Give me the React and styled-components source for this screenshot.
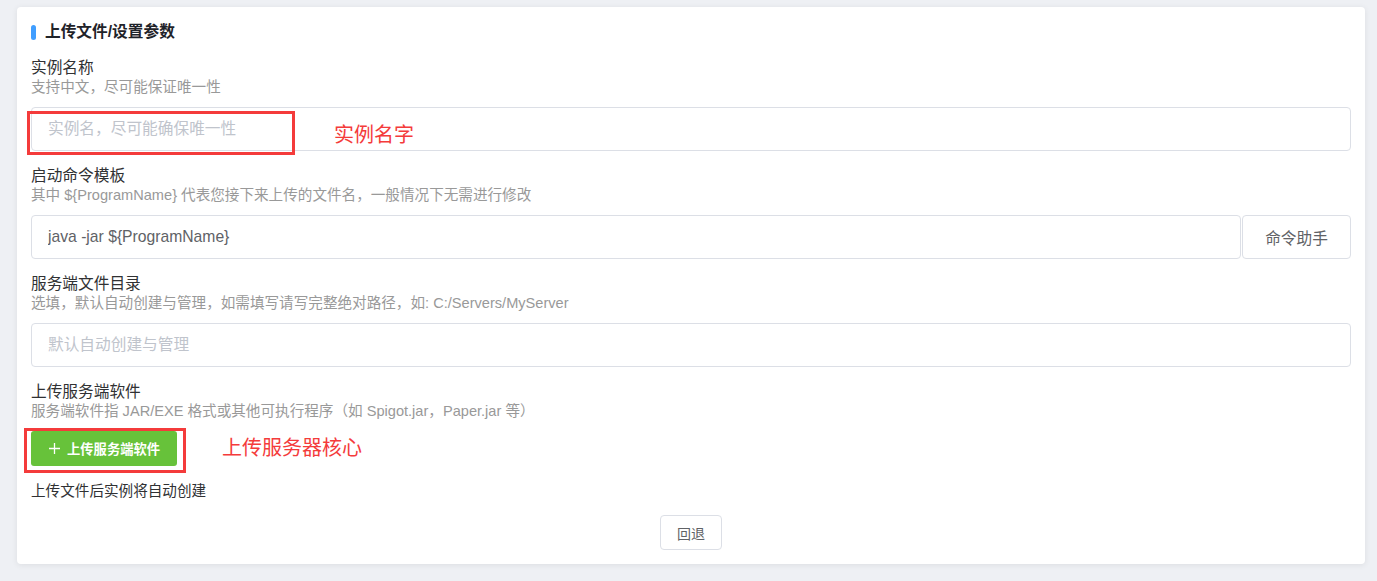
import React from 'react';
import styled, { createGlobalStyle } from 'styled-components';

const GlobalStyle = createGlobalStyle`
    html, body {
        margin: 0;
        padding: 0;
        background: #eef0f4;
        font-family: "Liberation Sans", "Noto Sans CJK SC", sans-serif;
    }
`;

const Page = styled.div`
    padding: 7px 12px 18px 17px;
`;

const Card = styled.div`
    background: #fff;
    border-radius: 4px;
    box-shadow: 0 1px 6px rgba(0, 0, 0, 0.08);
    padding: 16px 14px 14px 14px;
`;

const Title = styled.h3`
    display: flex;
    align-items: center;
    gap: 9px;
    margin: 0 0 17px 0;
    font-size: 15.7px;
    line-height: 18px;
    font-weight: 700;
    color: #1f2329;
    &::before {
        content: '';
        width: 5px;
        height: 15px;
        border-radius: 3px;
        background: #409eff;
    }
`;

const Field = styled.div`
    margin-bottom: ${props => props.last ? 0 : 15}px;
`;

const Label = styled.div`
    font-size: 15.7px;
    line-height: 20px;
    color: #303133;
`;

const Desc = styled.div`
    font-size: 14.6px;
    line-height: 18px;
    color: #999;
    margin-bottom: 11px;
`;

const Annotated = styled.div`
    position: relative;
    display: flex;
`;

const RedBox = styled.div`
    position: absolute;
    border: 3px solid #f43b3b;
    box-sizing: border-box;
    pointer-events: none;
`;

const RedNote = styled.span`
    position: absolute;
    font-size: 20px;
    line-height: 24px;
    color: #f43b3b;
    white-space: nowrap;
`;

const TextInput = styled.input`
    flex: 1;
    box-sizing: border-box;
    height: 44px;
    border: 1px solid #dcdfe6;
    border-radius: 4px;
    padding: 0 16px;
    font: 15.7px "Liberation Sans", "Noto Sans CJK SC", sans-serif;
    color: #606266;
    outline: none;
    &::placeholder {
        color: #c0c4cc;
    }
`;

const SideButton = styled.button`
    width: 109px;
    height: 44px;
    margin-left: 1px;
    background: #fff;
    border: 1px solid #dcdfe6;
    border-radius: 4px;
    font: 15.7px "Liberation Sans", "Noto Sans CJK SC", sans-serif;
    color: #606266;
`;

const UploadButton = styled.button`
    display: flex;
    align-items: center;
    gap: 7px;
    height: 35px;
    padding: 0 17px 0 18px;
    background: #67c23a;
    border: none;
    border-radius: 3px;
    color: #fff;
    font: 700 13.3px "Liberation Sans", "Noto Sans CJK SC", sans-serif;
`;

const Hint = styled.div`
    margin-top: 16px;
    font-size: 14.6px;
    line-height: 18px;
    color: #303133;
`;

const Footer = styled.div`
    display: flex;
    justify-content: center;
    margin-top: 15px;
`;

const BackButton = styled.button`
    height: 35px;
    width: 62px;
    background: #fff;
    border: 1px solid #dcdfe6;
    border-radius: 4px;
    font: 14px "Liberation Sans", "Noto Sans CJK SC", sans-serif;
    color: #606266;
`;

export default function App() {
    return (
        <Page>
            <GlobalStyle />
            <Card>
                <Title>上传文件/设置参数</Title>

                <Field>
                    <Label>实例名称</Label>
                    <Desc>支持中文，尽可能保证唯一性</Desc>
                    <Annotated>
                        <TextInput placeholder="实例名，尽可能确保唯一性" />
                        <RedBox style={{ left: -4, top: 4, width: 268, height: 44 }} />
                        <RedNote style={{ left: 303, top: 16 }}>实例名字</RedNote>
                    </Annotated>
                </Field>

                <Field>
                    <Label>启动命令模板</Label>
                    <Desc>其中 ${'{'}ProgramName{'}'} 代表您接下来上传的文件名，一般情况下无需进行修改</Desc>
                    <Annotated>
                        <TextInput defaultValue="java -jar ${ProgramName}" />
                        <SideButton>命令助手</SideButton>
                    </Annotated>
                </Field>

                <Field>
                    <Label>服务端文件目录</Label>
                    <Desc>选填，默认自动创建与管理，如需填写请写完整绝对路径，如: C:/Servers/MyServer</Desc>
                    <Annotated>
                        <TextInput placeholder="默认自动创建与管理" />
                    </Annotated>
                </Field>

                <Field last>
                    <Label>上传服务端软件</Label>
                    <Desc>服务端软件指 JAR/EXE 格式或其他可执行程序（如 Spigot.jar，Paper.jar 等）</Desc>
                    <Annotated>
                        <UploadButton>
                            <svg width="11" height="11" viewBox="0 0 11 11">
                                <path d="M5.5 0v11M0 5.5h11" stroke="#fff" strokeWidth="1.3" />
                            </svg>
                            上传服务端软件
                        </UploadButton>
                        <RedBox style={{ left: -7, top: -3, width: 162, height: 45 }} />
                        <RedNote style={{ left: 191, top: 5 }}>上传服务器核心</RedNote>
                    </Annotated>
                    <Hint>上传文件后实例将自动创建</Hint>
                </Field>

                <Footer>
                    <BackButton>回退</BackButton>
                </Footer>
            </Card>
        </Page>
    );
}
